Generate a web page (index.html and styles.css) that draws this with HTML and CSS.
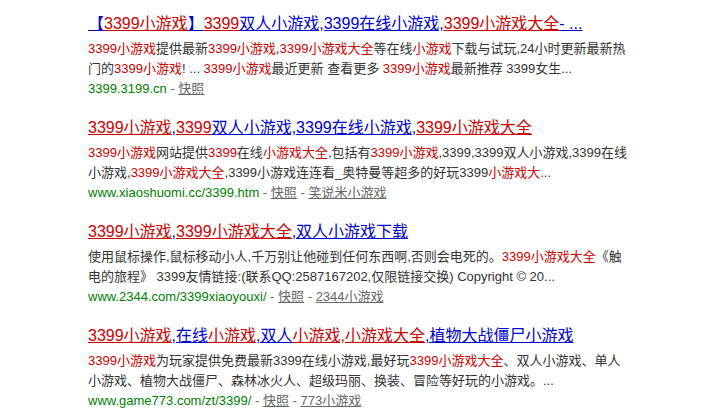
FILE: index.html
```html
<!DOCTYPE html>
<html lang="zh-CN">
<head>
<meta charset="utf-8">
<title>3399小游戏 - 搜索结果</title>
<link rel="stylesheet" href="styles.css">
</head>
<body>
<div class="results">
  <div class="result">
    <h3 class="t"><a href="#">【<em>3399小游戏</em>】<em>3399</em>双人小游戏,3399在线小游戏,<em>3399小游戏大全</em>- ...</a></h3>
    <div class="abs"><em>3399小游戏</em>提供最新<em>3399小游戏</em>,<em>3399小游戏大全</em>等在线<em>小游戏</em>下载与试玩,24小时更新最新热门的<em>3399小游戏</em>! ... <em>3399小游戏</em>最近更新 查看更多 <em>3399小游戏</em>最新推荐 3399女生...</div>
    <div class="meta"><span class="url">3399.3199.cn</span> - <a class="k" href="#">快照</a></div>
  </div>
  <div class="result">
    <h3 class="t"><a href="#"><em>3399小游戏</em>,<em>3399</em>双人小游戏,3399在线小游戏,<em>3399小游戏大全</em></a></h3>
    <div class="abs"><em>3399小游戏</em>网站提供<em>3399</em>在线<em>小游戏大全</em>,包括有<em>3399小游戏</em>,3399,3399双人小游戏,3399在线小游戏,<em>3399小游戏大全</em>,3399小游戏连连看_奥特曼等超多的好玩3399<em>小游戏大</em>...</div>
    <div class="meta"><span class="url">www.xiaoshuomi.cc/3399.htm</span> - <a class="k" href="#">快照</a> - <a class="k" href="#">笑说米小游戏</a></div>
  </div>
  <div class="result">
    <h3 class="t"><a href="#"><em>3399小游戏</em>,<em>3399小游戏大全</em>,双人小游戏下载</a></h3>
    <div class="abs">使用鼠标操作,鼠标移动小人,千万别让他碰到任何东西啊,否则会电死的。<em>3399小游戏大全</em>《触电的旅程》 3399友情链接:(联系QQ:2587167202,仅限链接交换) Copyright © 20...</div>
    <div class="meta"><span class="url">www.2344.com/3399xiaoyouxi/</span> - <a class="k" href="#">快照</a> - <a class="k" href="#">2344小游戏</a></div>
  </div>
  <div class="result">
    <h3 class="t"><a href="#"><em>3399小游戏</em>,在线<em>小游戏</em>,双人<em>小游戏,小游戏大全</em>,植物大战僵尸小游戏</a></h3>
    <div class="abs"><em>3399小游戏</em>为玩家提供免费最新3399在线小游戏,最好玩<em>3399小游戏大全</em>、双人小游戏、单人小游戏、植物大战僵尸、森林冰火人、超级玛丽、换装、冒险等好玩的小游戏。...</div>
    <div class="meta"><span class="url">www.game773.com/zt/3399/</span> - <a class="k" href="#">快照</a> - <a class="k" href="#">773小游戏</a></div>
  </div>
</div>
</body>
</html>
```

FILE: styles.css
```css
html, body {
  margin: 0;
  padding: 0;
  background: #fff;
}
body {
  font-family: Arial, "Liberation Sans", "Noto Sans CJK SC", sans-serif;
  color: #333;
}
.results {
  padding: 13px 0 0 88px;
  width: 540px;
}
.result {
  margin-bottom: 18px;
}
.t {
  margin: 0 0 4px;
  font-size: 16px;
  font-weight: normal;
  line-height: 22px;
  white-space: nowrap;
}
.t a {
  color: #00c;
  text-decoration: underline;
}
.t em {
  color: #c00;
  text-decoration: underline;
}
em {
  font-style: normal;
  color: #c00;
}
.abs {
  font-size: 13px;
  line-height: 20px;
  color: #333;
}
.meta {
  font-size: 13px;
  line-height: 20px;
  color: #666;
}
.url {
  color: #008000;
}
.k {
  color: #666;
  text-decoration: underline;
}
```
